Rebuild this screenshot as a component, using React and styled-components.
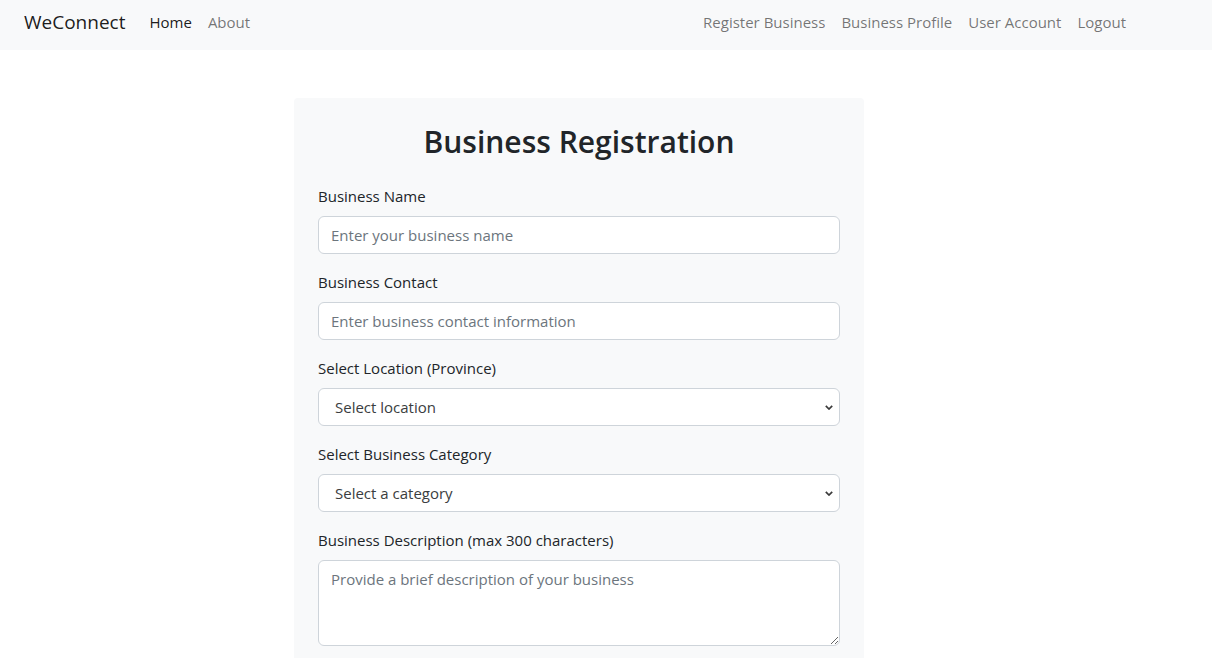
import styled, { createGlobalStyle } from 'styled-components';

const GlobalStyle = createGlobalStyle`
  * {
    box-sizing: border-box;
  }
  body {
    margin: 0;
    background: #fff;
    color: #212529;
    font-family: "Open Sans", "Noto Sans", sans-serif;
    font-size: 15px;
    line-height: 24px;
  }
`;

const fields = [
  { label: 'Business Name', kind: 'input', placeholder: 'Enter your business name' },
  { label: 'Business Contact', kind: 'input', placeholder: 'Enter business contact information' },
  { label: 'Select Location (Province)', kind: 'select', value: 'Select location' },
  { label: 'Select Business Category', kind: 'select', value: 'Select a category' },
  { label: 'Business Description (max 300 characters)', kind: 'textarea', placeholder: 'Provide a brief description of your business' },
];

const Chevron = () => (
  <ChevronIcon width="8" height="5" viewBox="0 0 8 5">
    <path d="M0.8 0.8 L4 4 L7.2 0.8" fill="none" stroke="#3a3a3a" strokeWidth="1.7" />
  </ChevronIcon>
);

const Field = ({ field }) => (
  <FieldGroup>
    <Label>{field.label}</Label>
    {field.kind === 'input' && <Input type="text" placeholder={field.placeholder} />}
    {field.kind === 'select' && (
      <SelectWrap>
        <Select defaultValue="">
          <option value="">{field.value}</option>
        </Select>
        <Chevron />
      </SelectWrap>
    )}
    {field.kind === 'textarea' && <TextArea rows={3} placeholder={field.placeholder} />}
  </FieldGroup>
);

const App = () => {
  return (
    <>
      <GlobalStyle />
      <Navbar>
        <Brand>WeConnect</Brand>
        <NavList>
          <NavLink active>Home</NavLink>
          <NavLink>About</NavLink>
        </NavList>
        <NavList right>
          <NavLink>Register Business</NavLink>
          <NavLink>Business Profile</NavLink>
          <NavLink>User Account</NavLink>
          <NavLink>Logout</NavLink>
        </NavList>
      </Navbar>

      <Main>
        <Card>
          <Title>Business Registration</Title>
          {fields.map((f) => (
            <Field key={f.label} field={f} />
          ))}
        </Card>
      </Main>
    </>
  );
};

const Navbar = styled.nav`
  height: 50px;
  background: #f8f9fa;
  display: flex;
  align-items: flex-start;
  padding: 10px 78px 0 24px;
`;

const Brand = styled.a`
  font-size: 19px;
  line-height: 26px;
  margin-top: -1px;
  margin-right: 16px;
  color: rgba(0, 0, 0, 0.9);
`;

const NavList = styled.ul`
  display: flex;
  list-style: none;
  margin: 0;
  padding: 0;
  margin-left: ${(p) => (p.right ? 'auto' : '0')};
`;

const NavLink = styled.li`
  padding: 0 8px;
  line-height: 24px;
  color: ${(p) => (p.active ? 'rgba(0, 0, 0, 0.9)' : 'rgba(0, 0, 0, 0.55)')};
  cursor: pointer;
`;

const Main = styled.main`
  padding: 48px 0 0 294px;
`;

const Card = styled.div`
  width: 570px;
  background: #f8f9fa;
  border-radius: 4px;
  padding: 24px 24px 12px;
`;

const Title = styled.h2`
  margin: 0 0 24px;
  padding-top: 2px;
  text-align: center;
  font-size: 30px;
  line-height: 36px;
  font-weight: 600;
  color: #212529;
`;

const FieldGroup = styled.div`
  margin-bottom: 16px;
`;

const Label = styled.label`
  display: block;
  margin-bottom: 8px;
  line-height: 24px;
  color: #212529;
`;

const controlBase = `
  display: block;
  width: 100%;
  font: inherit;
  font-size: 15px;
  line-height: 24px;
  color: #212529;
  background: #fff;
  border: 1px solid #ced4da;
  border-radius: 6px;
  padding: 6px 12px;
  outline: none;
  &::placeholder {
    color: #6c757d;
  }
`;

const Input = styled.input`
  ${controlBase}
  height: 38px;
`;

const SelectWrap = styled.div`
  position: relative;
`;

const Select = styled.select`
  ${controlBase}
  height: 38px;
  padding-left: 16px;
  color: #3a3d40;
  appearance: none;
  -webkit-appearance: none;
`;

const ChevronIcon = styled.svg`
  position: absolute;
  right: 7px;
  top: 17px;
  pointer-events: none;
`;

const TextArea = styled.textarea`
  ${controlBase}
  height: 86px;
  resize: vertical;
`;

export default App;
